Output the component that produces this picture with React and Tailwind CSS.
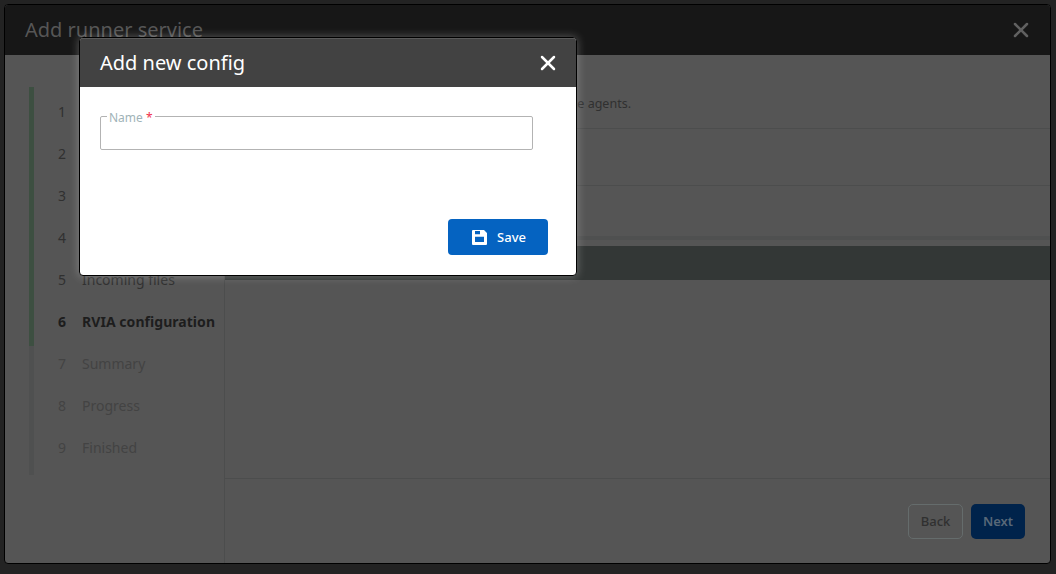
import { X } from "lucide-react";

const steps = [
  { n: 1, label: "Runner" },
  { n: 2, label: "Service" },
  { n: 3, label: "Agents" },
  { n: 4, label: "Outgoing files" },
  { n: 5, label: "Incoming files" },
  { n: 6, label: "RVIA configuration", active: true },
  { n: 7, label: "Summary", todo: true },
  { n: 8, label: "Progress", todo: true },
  { n: 9, label: "Finished", todo: true },
];

const SaveIcon = () => (
  <svg width="15" height="15" viewBox="0 0 15 15">
    <path
      fillRule="evenodd"
      clipRule="evenodd"
      d="M1 0h11l3 3v11a1 1 0 0 1-1 1H1a1 1 0 0 1-1-1V1a1 1 0 0 1 1-1Zm2 1v3.300h5V1H3Zm0 5.700V12h9V6.700H3Z"
      fill="#fff"
    />
  </svg>
);

export default function App() {
  return (
    <div className="relative h-[574px] w-[1056px] overflow-hidden bg-[#232323] p-[4px] font-['Noto_Sans',sans-serif]">
      {/* wizard behind the overlay */}
      <div className="flex h-[560px] w-[1047px] flex-col overflow-hidden rounded-[4px] border border-black bg-[#555555]">
        <div className="flex h-[50px] shrink-0 items-center justify-between bg-[#171717] pl-[20px] pr-[17px]">
          <span className="text-[20px] text-[#565656]">Add runner service</span>
          <X size={24} strokeWidth={2.5} className="text-[#606060]" />
        </div>
        <div className="flex min-h-0 flex-1">
          <div className="w-[220px] shrink-0 border-r border-[#4c4d4d] pl-[24px] pt-[32px]">
            <div className="flex h-[388px]">
              <div className="flex w-[5px] shrink-0 flex-col">
                <div className="h-[259px] bg-[#3d4f41]" />
                <div className="h-[129px] bg-[#4f5050]" />
              </div>
              <div className="flex flex-col pl-[24px] pt-[3px]">
                {steps.map((s) => (
                  <div
                    key={s.n}
                    className={`flex h-[42px] shrink-0 items-center text-[14px] ${s.active ? "font-bold tracking-[0.05px] text-[#1d1d1d]" : s.todo ? "text-[#434343]" : "text-[#303030]"}`}
                  >
                    <span className="w-[24px]">{s.n}</span>
                    <span className="whitespace-nowrap">{s.label}</span>
                  </div>
                ))}
              </div>
            </div>
          </div>
          <div className="flex min-w-0 flex-1 flex-col">
            <div className="h-[424px] border-b border-[#4c4d4d]">
              <div className="flex h-[74px] items-end justify-end border-b border-[#4c4d4d] pb-[14px] pr-[419px] text-[12.500px] text-[#303030]">
                <span>the agents.</span>
              </div>
              <div className="h-[57px] border-b border-[#4c4d4d]" />
              <div className="h-[54px] border-b-[4px] border-[#4f5050]" />
              <div className="mt-[6px] h-[34px] bg-[#333736]" />
            </div>
            <div className="flex flex-1 items-start justify-end gap-[8px] pr-[25px] pt-[25px]">
              <div className="flex h-[35px] w-[55px] items-center justify-center rounded-[5px] border border-[#656c6c] text-[13px] font-medium text-[#303030]">
                Back
              </div>
              <div className="flex h-[35px] w-[54px] items-center justify-center rounded-[5px] bg-[#00234b] text-[13px] font-semibold text-[#586878]">
                Next
              </div>
            </div>
          </div>
        </div>
      </div>

      {/* config dialog */}
      <div className="absolute left-[79px] top-[37px] flex h-[239px] w-[498px] flex-col overflow-hidden rounded-[4px] border border-black bg-white shadow-[0_0_10px_rgba(255,255,255,0.3)]">
        <div className="flex h-[49px] shrink-0 items-center justify-between border-t border-[#5a5a5a] bg-[#424242] pl-[20px] pr-[16px]">
          <span className="text-[20px] text-white">Add new config</span>
          <X size={24} strokeWidth={2.5} className="text-white" />
        </div>
        <div className="flex flex-1 flex-col px-[20px] pt-[29px]">
          <div className="relative h-[34px] w-[433px] rounded-[2px] border border-[#b3b3b3]">
            <span className="absolute left-[6px] top-[-5px] bg-white px-[2px] text-[12px] leading-[12px] text-[#9fb3b8]">
              Name <span className="text-[#f0304a]">*</span>
            </span>
          </div>
          <div className="mt-[69px] flex w-[448px] justify-end">
            <div className="flex h-[36px] w-[100px] items-center justify-center gap-[10px] rounded-[4px] bg-[#0563c1] pl-[2px] text-[13px] font-medium text-white">
              <SaveIcon />
              <span className="pt-[1px]">Save</span>
            </div>
          </div>
        </div>
      </div>
    </div>
  );
}
